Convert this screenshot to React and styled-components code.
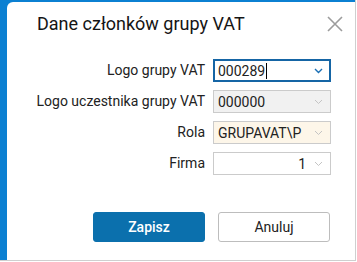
import React from "react";
import styled, { createGlobalStyle } from "styled-components";

const Global = createGlobalStyle`
  html, body { margin: 0; padding: 0; background: #ffffff; }
  body { font-family: Roboto, "Liberation Sans", sans-serif; }
  * { box-sizing: border-box; }
`;

const Frame = styled.div`
  width: 356px;
  height: 261px;
  background: #0b80d2;
  border-right: 1px solid #cfcfcf;
  border-bottom: 1px solid #cfcfcf;
  padding: 2px 0 0 7px;
  display: flex;
`;

const Panel = styled.div`
  flex: 1;
  background: #ffffff;
  border-top-left-radius: 6px;
  display: flex;
  flex-direction: column;
`;

const Header = styled.div`
  display: flex;
  align-items: center;
  justify-content: space-between;
  padding: 11px 11px 0 30px;
  height: 33px;
`;

const Title = styled.div`
  font-size: 18px;
  font-weight: 400;
  color: #151515;
  line-height: 22px;
`;

const Close = styled.button`
  border: none;
  background: none;
  padding: 0;
  width: 18px;
  height: 18px;
  display: flex;
  align-items: center;
  justify-content: center;
`;

const Form = styled.div`
  display: grid;
  grid-template-columns: 1fr 118px;
  column-gap: 8px;
  row-gap: 8px;
  margin-top: 24px;
  padding-right: 24px;
  align-items: center;
`;

const Label = styled.div`
  text-align: right;
  font-size: 14px;
  color: #222;
  line-height: 23px;
`;

const bgFor = {
  normal: "#ffffff",
  disabled: "#f1f1f1",
  required: "#fdf6e9",
};

const Field = styled.div`
  height: 23px;
  border: ${(p) => (p.$focused ? "2px solid #1565a5" : "1px solid #cbcbcb")};
  background: ${(p) => bgFor[p.$variant || "normal"]};
  display: flex;
  align-items: center;
  padding: 0 ${(p) => (p.$focused ? "6px" : "7px")} 0 ${(p) => (p.$focused ? "3px" : "4px")};
  font-size: 14px;
  color: #222;
`;

const Value = styled.span`
  flex: 1;
  padding-right: ${(p) => (p.$right ? "8px" : "0")};
  display: flex;
  align-items: center;
  justify-content: ${(p) => (p.$right ? "flex-end" : "flex-start")};
`;

const Caret = styled.span`
  display: inline-block;
  width: 1px;
  height: 16px;
  background: #000;
  margin-left: 1px;
`;

const Buttons = styled.div`
  display: flex;
  justify-content: flex-end;
  gap: 13px;
  padding-right: 25px;
  margin-top: 37px;
`;

const Button = styled.button`
  width: 112px;
  height: 30px;
  border-radius: 3px;
  font-family: Roboto, "Liberation Sans", sans-serif;
  font-size: 14px;
  font-weight: ${(p) => (p.$primary ? 500 : 400)};
  color: ${(p) => (p.$primary ? "#ffffff" : "#222")};
  background: ${(p) => (p.$primary ? "#0b70ad" : "#ffffff")};
  border: 1px solid ${(p) => (p.$primary ? "#0b70ad" : "#bdbdbd")};
  padding: 0;
`;

const Chevron = ({ active }) => (
  <svg width="9" height="6" viewBox="0 0 9 6">
    <path
      d="M1 1 L4.5 4.5 L8 1"
      fill="none"
      stroke={active ? "#1a6fb5" : "#c4c4c4"}
      strokeWidth={active ? 1.4 : 1}
    />
  </svg>
);

const Row = ({ label, value, variant, focused, right }) => (
  <>
    <Label>{label}</Label>
    <Field $variant={variant} $focused={focused}>
      <Value $right={right}>
        {value}
        {focused && <Caret />}
      </Value>
      <Chevron active={focused} />
    </Field>
  </>
);

export default function App() {
  return (
    <>
      <Global />
      <Frame>
        <Panel>
          <Header>
            <Title>Dane członków grupy VAT</Title>
            <Close aria-label="close">
              <svg width="16" height="16" viewBox="0 0 16 16">
                <path d="M1 1 L15 15 M15 1 L1 15" stroke="#9c9c9c" strokeWidth="1.6" />
              </svg>
            </Close>
          </Header>
          <Form>
            <Row label="Logo grupy VAT" value="000289" focused />
            <Row label="Logo uczestnika grupy VAT" value="000000" variant="disabled" />
            <Row label="Rola" value="GRUPAVAT\P" variant="required" />
            <Row label="Firma" value="1" right />
          </Form>
          <Buttons>
            <Button $primary>Zapisz</Button>
            <Button>Anuluj</Button>
          </Buttons>
        </Panel>
      </Frame>
    </>
  );
}
